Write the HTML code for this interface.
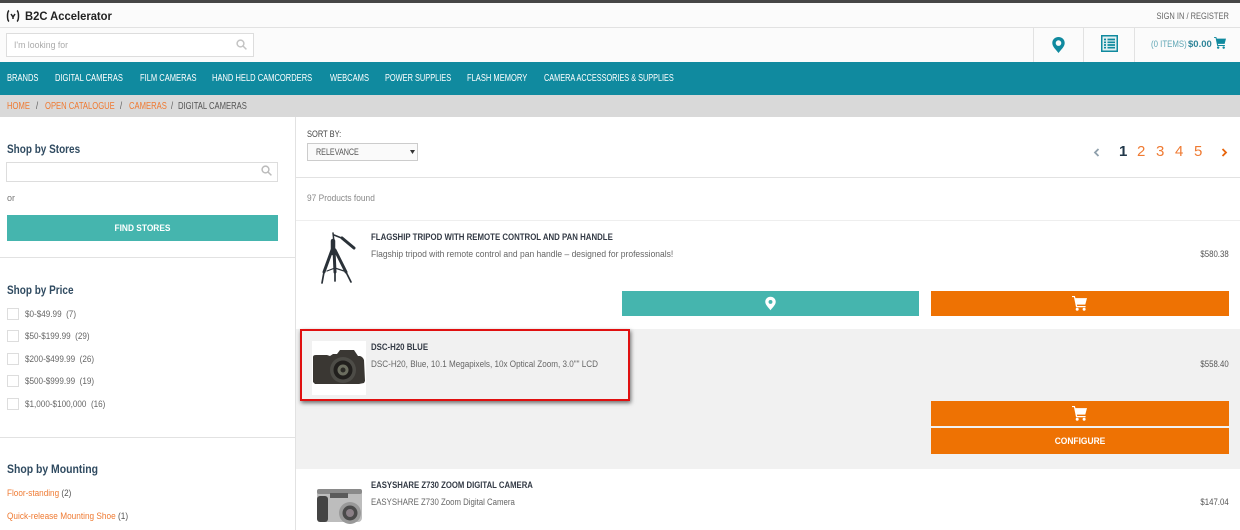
<!DOCTYPE html>
<html><head><meta charset="utf-8"><style>
html,body{margin:0;padding:0;background:#fff}
#p{position:relative;width:1240px;height:530px;overflow:hidden;background:#fff;font-family:"Liberation Sans",sans-serif;font-size:9.5px;color:#555;filter:blur(.3px)}
#p div,#p svg{position:absolute}
.t{white-space:nowrap;line-height:12px;transform-origin:0 50%}
.n{color:#fff;font-size:9.8px;top:73px;transform:scaleX(.77)}
.b{font-size:9.8px;top:101px;color:#ef7a32;transform:scaleX(.78)}
.h{font-weight:bold;font-size:11.6px;color:#2f4a60;left:7px;transform:scaleX(.86)}
.pt{font-weight:bold;font-size:9.5px;color:#333a45;left:371px;transform:scaleX(.825)}
.pd{font-size:9.6px;color:#666;left:371px;transform:scaleX(.845)}
.pr{font-size:9.6px;color:#555;right:11px;transform:scaleX(.815);transform-origin:100% 50%}
.f{font-size:9.5px;color:#666;left:25px;transform:scaleX(.855)}
.c{left:7px;width:10px;height:10px;border:1px solid #ddd;background:#fff}
.pg{font-size:15px;color:#ef7a32;top:144px;line-height:16px}
.o{background:#ee7203}
.g{background:#45b5ae}
</style></head><body><div id="p">
<div style="left:0;top:0;width:1240px;height:3px;background:#464646"></div>
<div style="left:0;top:3px;width:1240px;height:24px;background:#fbfbfb"></div>
<div style="left:0;top:27px;width:1240px;height:1px;background:#e2e2e2"></div>
<div style="left:0;top:28px;width:1240px;height:34px;background:#fbfbfb"></div>
<svg style="left:6px;top:9px" width="14" height="14" viewBox="0 0 14 14" fill="none" stroke="#222" stroke-width="1.5"><path d="M3 1.5C1 3 1 11 3 12.5M11 1.500C13 3 13 11 11 12.500"/><path d="M5 5l2 3 2-3M7 8v2"/></svg>
<div class="t" style="left:25px;top:9px;font-size:12px;font-weight:bold;color:#222;line-height:14px;transform:scaleX(.935)">B2C Accelerator</div>
<div class="t" style="right:11px;top:10px;font-size:9.3px;color:#666;transform:scaleX(.805);transform-origin:100% 50%">SIGN IN / REGISTER</div>

<div style="left:6px;top:33px;width:246px;height:22px;border:1px solid #ddd;background:#fff"></div>
<div class="t" style="left:14px;top:40px;font-size:9.6px;color:#aaa;transform:scaleX(.91)">I'm looking for</div>
<svg style="left:236px;top:39px" width="11" height="11" viewBox="0 0 11 11" fill="none" stroke="#c4c4c4" stroke-width="1.5"><circle cx="4.5" cy="4.5" r="3.4"/><path d="M7 7l3.4 3.4"/></svg>

<div style="left:1033px;top:28px;width:1px;height:34px;background:#e2e2e2"></div>
<div style="left:1083px;top:28px;width:1px;height:34px;background:#e2e2e2"></div>
<div style="left:1134px;top:28px;width:1px;height:34px;background:#e2e2e2"></div>
<svg style="left:1052px;top:37px" width="13" height="16" viewBox="0 0 13 16"><path fill-rule="evenodd" fill="#108a9f" d="M6.5 0C2.9 0 .3 2.6.3 6c0 3.6 3.6 6.6 6.2 10 2.600-3.400 6.200-6.400 6.200-10C12.700 2.600 10.100 0 6.500 0zM6.500 3.300a2.800 2.800 0 1 1 0 5.600 2.800 2.800 0 0 1 0-5.600z"/></svg>
<svg style="left:1101px;top:35px" width="17" height="17" viewBox="0 0 17 17"><rect x=".75" y=".75" width="15.500" height="15.500" fill="#e3f0f2" stroke="#108a9f" stroke-width="1.500"/><path stroke="#108a9f" stroke-width="1.700" d="M3 4.500h2M6.500 4.500h7.500M3 7.300h2M6.500 7.300h7.500M3 10h2M6.500 10h7.500M3 12.700h2M6.500 12.700h7.500"/></svg>
<div class="t" style="left:1151px;top:39px;font-size:9.5px;color:#5fa6b5;transform:scaleX(.825)">(0 ITEMS)</div>
<div class="t" style="left:1188px;top:39px;font-size:9.500px;font-weight:bold;color:#2f8599">$0.00</div>
<svg style="left:1214px;top:37px" width="12" height="12" viewBox="0 0 13 13"><path fill="#108a9f" d="M0 0h2.500l.5 1.800h10l-1.500 5.700H4.200l.3 1.200h7.300v1H3.500L1.700 1H0z"/><circle cx="4.500" cy="11.500" r="1.300" fill="#108a9f"/><circle cx="10.500" cy="11.500" r="1.300" fill="#108a9f"/></svg>

<div style="left:0;top:62px;width:1240px;height:33px;background:#108a9f"></div>
<div class="t n" style="left:7px">BRANDS</div>
<div class="t n" style="left:55px">DIGITAL CAMERAS</div>
<div class="t n" style="left:140px">FILM CAMERAS</div>
<div class="t n" style="left:212px">HAND HELD CAMCORDERS</div>
<div class="t n" style="left:330px">WEBCAMS</div>
<div class="t n" style="left:385px;transform:scaleX(.755)">POWER SUPPLIES</div>
<div class="t n" style="left:467px">FLASH MEMORY</div>
<div class="t n" style="left:544px;transform:scaleX(.745)">CAMERA ACCESSORIES &amp; SUPPLIES</div>

<div style="left:0;top:95px;width:1240px;height:22px;background:#d9d9d9"></div>
<div class="t b" style="left:7px">HOME</div>
<div class="t b" style="left:36px;color:#555">/</div>
<div class="t b" style="left:45px">OPEN CATALOGUE</div>
<div class="t b" style="left:120px;color:#555">/</div>
<div class="t b" style="left:129px">CAMERAS</div>
<div class="t b" style="left:171px;color:#555">/</div>
<div class="t b" style="left:178px;color:#555">DIGITAL CAMERAS</div>

<div style="left:295px;top:117px;width:1px;height:413px;background:#e2e2e2"></div>
<div class="t h" style="top:144px">Shop by Stores</div>
<div style="left:6px;top:162px;width:270px;height:18px;border:1px solid #ddd;background:#fff"></div>
<svg style="left:261px;top:165px" width="11" height="11" viewBox="0 0 11 11" fill="none" stroke="#bbb" stroke-width="1.500"><circle cx="4.500" cy="4.500" r="3.400"/><path d="M7 7l3.400 3.400"/></svg>
<div class="t" style="left:7px;top:192px;font-size:9px;color:#777">or</div>
<div style="left:7px;top:215px;width:271px;height:26px;background:#45b5ae"></div>
<div class="t" style="left:7px;width:271px;text-align:center;top:222px;font-size:9.400px;font-weight:bold;color:#fff;transform:scaleX(.89);transform-origin:50% 50%">FIND STORES</div>
<div style="left:0;top:257px;width:295px;height:1px;background:#e2e2e2"></div>

<div class="t h" style="top:285px">Shop by Price</div>
<div class="c" style="top:308px"></div><div class="t f" style="top:309px">$0-$49.99 &nbsp;(7)</div>
<div class="c" style="top:330px"></div><div class="t f" style="top:331px">$50-$199.99 &nbsp;(29)</div>
<div class="c" style="top:353px"></div><div class="t f" style="top:354px">$200-$499.99 &nbsp;(26)</div>
<div class="c" style="top:375px"></div><div class="t f" style="top:376px">$500-$999.99 &nbsp;(19)</div>
<div class="c" style="top:398px"></div><div class="t f" style="top:399px">$1,000-$100,000 &nbsp;(16)</div>
<div style="left:0;top:437px;width:295px;height:1px;background:#e2e2e2"></div>

<div class="t h" style="top:464px;transform:scaleX(.9)">Shop by Mounting</div>
<div class="t" style="left:7px;top:488px;font-size:9.600px;color:#ef7a32;transform:scaleX(.85)">Floor-standing <span style="color:#555">(2)</span></div>
<div class="t" style="left:7px;top:511px;font-size:9.600px;color:#ef7a32;transform:scaleX(.86)">Quick-release Mounting Shoe <span style="color:#555">(1)</span></div>

<div class="t" style="left:307px;top:128px;font-size:9.300px;color:#444;transform:scaleX(.805)">SORT BY:</div>
<div style="left:307px;top:143px;width:109px;height:16px;border:1px solid #ccc;background:#fafafa"></div>
<div class="t" style="left:316px;top:146px;font-size:9.300px;color:#555;transform:scaleX(.77)">RELEVANCE</div>
<svg style="left:410px;top:150px" width="5" height="4" viewBox="0 0 5 4"><path d="M0 0h5L2.500 4z" fill="#333"/></svg>

<svg style="left:1093px;top:148px" width="7" height="9" viewBox="0 0 7 9" fill="none" stroke="#8fa0ac" stroke-width="1.800"><path d="M5.500 1L2 4.500 5.500 8"/></svg>
<div class="t pg" style="left:1119px;color:#22384a;font-weight:bold">1</div>
<div class="t pg" style="left:1137px">2</div>
<div class="t pg" style="left:1156px">3</div>
<div class="t pg" style="left:1175px">4</div>
<div class="t pg" style="left:1194px">5</div>
<svg style="left:1221px;top:148px" width="7" height="9" viewBox="0 0 7 9" fill="none" stroke="#e8650c" stroke-width="1.800"><path d="M1.500 1L5 4.500 1.500 8"/></svg>
<div style="left:296px;top:177px;width:944px;height:1px;background:#e2e2e2"></div>
<div class="t" style="left:307px;top:193px;font-size:9.500px;color:#888;transform:scaleX(.88)">97 Products found</div>
<div style="left:296px;top:220px;width:944px;height:1px;background:#eee"></div>

<svg style="left:318px;top:230px" width="42" height="56" viewBox="0 0 42 56" fill="none" stroke="#2a3138" stroke-linecap="round"><path stroke-width="1.500" d="M15 3l1 9M16 5l10 4"/><path stroke-width="3" d="M24 8l12 10"/><path stroke-width="4.500" d="M15 11v12"/><path stroke-width="3" d="M14 20L6 42M16 20l1 22M17 20l11 22"/><path stroke-width="1.700" d="M6 42L4 53M17 42v9M28 42l5 10"/><path stroke-width="1.200" d="M9 41l8-3 9 3"/></svg>
<div class="t pt" style="top:232px">FLAGSHIP TRIPOD WITH REMOTE CONTROL AND PAN HANDLE</div>
<div class="t pd" style="top:249px;transform:scaleX(.887)">Flagship tripod with remote control and pan handle – designed for professionals!</div>
<div class="t pr" style="top:249px">$580.38</div>
<div class="g" style="left:622px;top:291px;width:297px;height:25px"></div>
<svg style="left:765px;top:296px" width="11" height="15" viewBox="0 0 13 16"><path fill-rule="evenodd" fill="#fff" d="M6.500 0C2.900 0 .3 2.600.3 6c0 3.600 3.600 6.600 6.200 10 2.600-3.400 6.200-6.400 6.200-10C12.700 2.600 10.100 0 6.500 0zM6.500 3.800a2.300 2.300 0 1 1 0 4.600 2.300 2.300 0 0 1 0-4.600z"/></svg>
<div class="o" style="left:931px;top:291px;width:298px;height:25px"></div>
<svg style="left:1072px;top:296px" width="15" height="15" viewBox="0 0 13 13"><path fill="#fff" d="M0 0h2.500l.5 1.800h10l-1.500 5.700H4.200l.3 1.200h7.300v1H3.500L1.700 1H0z"/><circle cx="4.500" cy="11.500" r="1.300" fill="#fff"/><circle cx="10.500" cy="11.500" r="1.300" fill="#fff"/></svg>

<div style="left:296px;top:329px;width:944px;height:140px;background:#f1f1f1"></div>
<div style="left:300px;top:329px;width:326px;height:68px;border:2px solid #e01010;box-shadow:1px 2px 4px rgba(0,0,0,.55)"></div>
<div style="left:312px;top:341px;width:54px;height:54px;background:#fff"></div>
<svg style="left:312px;top:349px" width="54" height="38" viewBox="0 0 54 38"><path fill="#3a3733" d="M1 8q0-2 3-2h11l3 1 3-2h4l3-4h14l4 6h2q3 1 4 4l1 21-1 2-5 1H3l-2-2z"/><circle cx="31" cy="21" r="13" fill="#4d4c47"/><circle cx="31" cy="21" r="9.500" fill="#211f1d"/><circle cx="31" cy="21" r="5.500" fill="#6b6d5f"/><circle cx="31" cy="21" r="2.500" fill="#2b2a26"/></svg>
<div class="t pt" style="top:342px">DSC-H20 BLUE</div>
<div class="t pd" style="top:359px">DSC-H20, Blue, 10.1 Megapixels, 10x Optical Zoom, 3.0"" LCD</div>
<div class="t pr" style="top:359px">$558.40</div>
<div class="o" style="left:931px;top:401px;width:298px;height:25px"></div>
<svg style="left:1072px;top:406px" width="15" height="15" viewBox="0 0 13 13"><path fill="#fff" d="M0 0h2.500l.5 1.800h10l-1.500 5.700H4.200l.3 1.200h7.300v1H3.500L1.700 1H0z"/><circle cx="4.500" cy="11.500" r="1.300" fill="#fff"/><circle cx="10.500" cy="11.500" r="1.300" fill="#fff"/></svg>
<div class="o" style="left:931px;top:428px;width:298px;height:26px"></div>
<div class="t" style="left:931px;width:298px;text-align:center;top:435px;font-size:9.400px;font-weight:bold;color:#fff;transform:scaleX(.9);transform-origin:50% 50%">CONFIGURE</div>

<svg style="left:316px;top:487px" width="46" height="38" viewBox="0 0 46 38"><rect x="1" y="2" width="45" height="33" rx="4" fill="#bdbdbd"/><rect x="1" y="2" width="45" height="5" rx="2" fill="#8a8a8a"/><rect x="1" y="9" width="11" height="26" rx="3" fill="#444"/><rect x="14" y="6" width="18" height="5" fill="#5a5a5a"/><circle cx="34" cy="26" r="11" fill="#999"/><circle cx="34" cy="26" r="7.500" fill="#4a4a4a"/><circle cx="34" cy="26" r="4" fill="#8a7f86"/></svg>
<div class="t pt" style="top:480px;transform:scaleX(.815)">EASYSHARE Z730 ZOOM DIGITAL CAMERA</div>
<div class="t pd" style="top:497px;transform:scaleX(.815)">EASYSHARE Z730 Zoom Digital Camera</div>
<div class="t pr" style="top:497px">$147.04</div>
</div></body></html>
